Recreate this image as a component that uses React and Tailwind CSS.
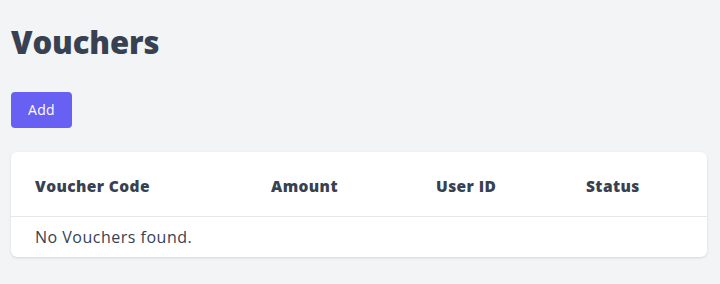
import React from 'react';

const Vouchers = () => {
  const vouchers = [];

  return (
    <div className="min-h-screen bg-gray-100 pl-[11px] pr-[13px] pt-[22px] font-['Open_Sans',sans-serif] text-[#374151]">
      <h1 className="text-[31px] leading-[40px] font-extrabold tracking-[-0.1px]">Vouchers</h1>

      <button className="mt-[30px] h-9 w-[61px] rounded bg-[#6860f2] text-sm font-medium tracking-[0.3px] text-white">
        Add
      </button>

      {/* Vouchers table */}
      <div className="mt-6 rounded-md bg-white shadow-sm">
        <table className="w-full text-left text-[15.5px]">
          <thead>
            <tr className="h-16 border-b border-gray-200">
              <th className="w-[260px] pl-6 pt-[5px] font-extrabold tracking-[0.4px]">Voucher Code</th>
              <th className="w-[165px] pt-[5px] font-extrabold tracking-[0.4px]">Amount</th>
              <th className="w-[150px] pt-[5px] font-extrabold tracking-[0.4px]">User ID</th>
              <th className="pt-[5px] font-extrabold tracking-[0.4px]">Status</th>
            </tr>
          </thead>
          <tbody>
            {vouchers.length === 0 && (
              <tr className="h-[41px]">
                <td colSpan={4} className="pl-6 text-[16px] tracking-[0.5px]">
                  No Vouchers found.
                </td>
              </tr>
            )}
          </tbody>
        </table>
      </div>
    </div>
  );
};

export default Vouchers;
